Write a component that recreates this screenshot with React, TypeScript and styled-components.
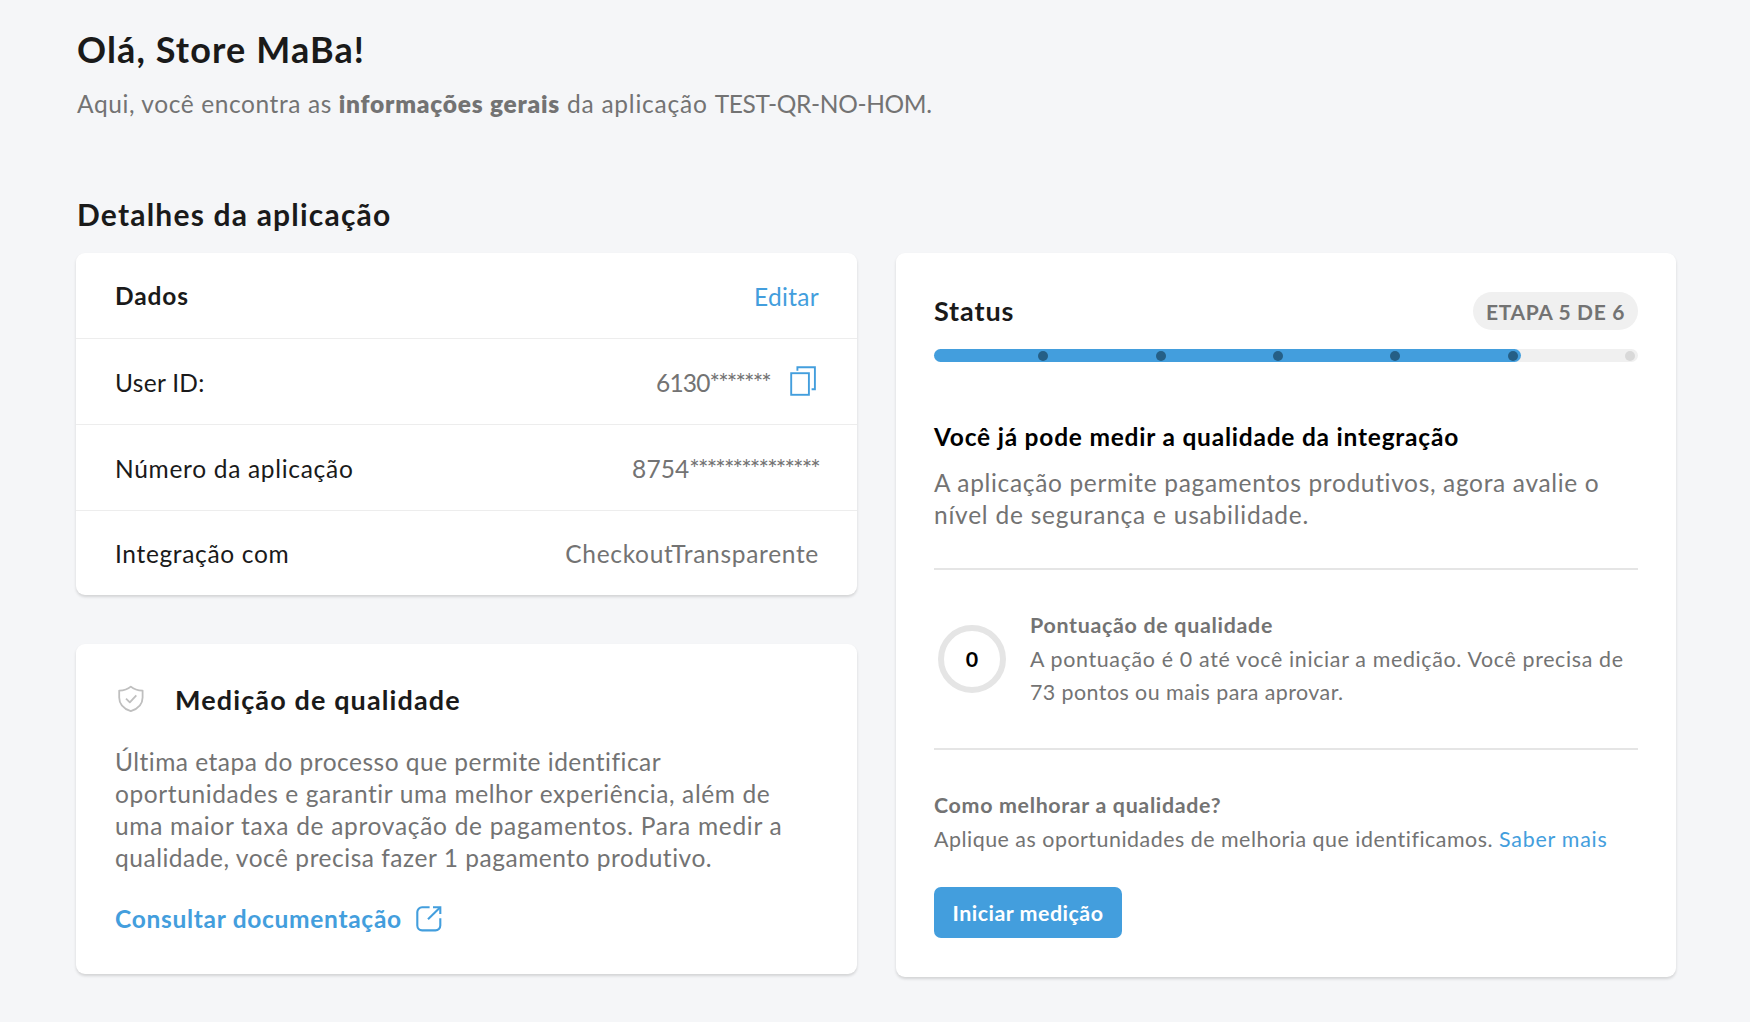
import React from "react";
import styled, { createGlobalStyle } from "styled-components";

const color = {
  page: "#f5f6f8",
  ink: "#1a1a1a",
  muted: "#737373",
  blue: "#439edd",
  line: "#ededed",
  rule: "#e5e5e5",
};

const GlobalStyle = createGlobalStyle`
  * { box-sizing: border-box; }
  body {
    margin: 0;
    background: ${color.page};
    color: ${color.ink};
    font-family: Lato, "Liberation Sans", sans-serif;
    -webkit-font-smoothing: antialiased;
  }
  h1, h2, h3, h4, p { margin: 0; }
`;

const Page = styled.main`
  width: 1750px;
  height: 1022px;
  padding: 27px 74px 0 76px;
  overflow: hidden;
`;

const Tracked = styled.span<{ $spacing: number }>`
  letter-spacing: ${(p) => p.$spacing}px;
`;

const PageTitle = styled.h1`
  padding-left: 1px;
  font-size: 36px;
  line-height: 44px;
  font-weight: 700;
  letter-spacing: 1.12px;
`;

const Intro = styled.p`
  margin-top: 17px;
  padding-left: 1px;
  color: ${color.muted};
  font-size: 24.5px;
  line-height: 32px;
  letter-spacing: 0.59px;
  white-space: nowrap;

  strong {
    font-weight: 800;
    letter-spacing: 0.78px;
  }
`;

const SectionTitle = styled.h2`
  margin-top: 76px;
  padding-left: 1px;
  font-size: 30px;
  line-height: 36px;
  font-weight: 700;
  letter-spacing: 1.2px;
`;

const Columns = styled.div`
  display: grid;
  grid-template-columns: 781px 780px;
  column-gap: 39px;
  align-items: start;
  margin-top: 21px;
`;

const Stack = styled.div`
  display: flex;
  flex-direction: column;
  gap: 49px;
`;

const Card = styled.section`
  background: #fff;
  border-radius: 9px;
  box-shadow: 0 2px 3px rgba(0, 0, 0, 0.14);
`;

const DataCard = styled(Card)`
  height: 342px;
`;

const Row = styled.div`
  display: flex;
  align-items: center;
  justify-content: space-between;
  height: 86px;
  padding: 2px 38px 0 39px;
  border-bottom: 1px solid ${color.line};
  font-size: 24.5px;
  line-height: 32px;

  &:last-child {
    height: 84px;
    border-bottom: 0;
  }
`;

const RowHeading = styled.h3`
  padding-bottom: 2px;
  font-size: 24.5px;
  font-weight: 700;
  letter-spacing: 0.9px;
`;

const RowLabel = styled.span<{ $spacing: number }>`
  letter-spacing: ${(p) => p.$spacing}px;
`;

const RowValue = styled.span`
  display: flex;
  align-items: center;
  color: ${color.muted};
  letter-spacing: 0.69px;
`;

const Mask = styled.span`
  letter-spacing: -1.77px;
`;

const CopyButton = styled.button`
  display: flex;
  width: 26px;
  height: 30px;
  margin: -3px 3px 0 20px;
  padding: 0;
  border: 0;
  background: none;
  color: ${color.blue};
`;

const Link = styled.a<{ $spacing: number }>`
  color: ${color.blue};
  text-decoration: none;
  letter-spacing: ${(p) => p.$spacing}px;
`;

const QualityCard = styled(Card)`
  height: 330px;
  padding: 39px 38px 0 39px;
`;

const QualityHeader = styled.header`
  display: flex;
  align-items: center;
  gap: 28px;
  height: 32px;
`;

const CardTitle = styled.h3<{ $spacing: number }>`
  padding-top: 1px;
  font-size: 27px;
  line-height: 32px;
  font-weight: 700;
  letter-spacing: ${(p) => p.$spacing}px;
`;

const Body = styled.p<{ $top: number }>`
  margin-top: ${(p) => p.$top}px;
  color: ${color.muted};
  font-size: 24.5px;
  line-height: 32px;
  white-space: nowrap;
`;

const DocsLink = styled.a`
  display: flex;
  align-items: center;
  gap: 14px;
  margin-top: 29px;
  color: ${color.blue};
  font-size: 24.5px;
  line-height: 32px;
  font-weight: 700;
  letter-spacing: 0.7px;
  text-decoration: none;
`;

const StatusCard = styled(Card)`
  height: 724px;
  padding: 39px 38px 0;
`;

const StatusHeader = styled.header`
  display: flex;
  align-items: center;
  justify-content: space-between;
  height: 38px;
`;

const StatusTitle = styled(CardTitle)`
  padding: 0 0 1px;
`;

const Badge = styled.span`
  display: flex;
  align-items: center;
  justify-content: center;
  width: 165px;
  height: 38px;
  border-radius: 19px;
  background: #f0f0f0;
  color: ${color.muted};
  font-size: 21px;
  font-weight: 700;
  letter-spacing: 0.65px;
`;

const Track = styled.div`
  display: flex;
  height: 13px;
  margin-top: 19px;
  border-radius: 7px;
  background: #f0f0f0;
`;

const Fill = styled.div`
  display: flex;
  height: 13px;
  border-radius: 7px;
  background: ${color.blue};
`;

const Step = styled.span`
  flex: 1;
  display: flex;
  justify-content: flex-end;
  padding: 2px 3px 0 0;
`;

const Dot = styled.i<{ $done?: boolean }>`
  width: 10px;
  height: 10px;
  border-radius: 50%;
  background: ${(p) => (p.$done ? "#255f86" : "#d9d9d9")};
`;

const StatusHeading = styled.h3`
  margin-top: 59px;
  color: #000;
  font-size: 24.5px;
  line-height: 32px;
  font-weight: 700;
  letter-spacing: 0.78px;
`;

const Score = styled.div`
  display: flex;
  align-items: flex-start;
  height: 182px;
  margin-top: 37px;
  padding-top: 39px;
  border-top: 2px solid ${color.rule};
  border-bottom: 2px solid ${color.rule};
`;

const Ring = styled.div`
  display: flex;
  align-items: center;
  justify-content: center;
  width: 68px;
  height: 68px;
  margin: 16px 24px 0 4px;
  border: 6.5px solid ${color.rule};
  border-radius: 50%;
  color: #000;
  font-size: 21.4px;
  font-weight: 700;
`;

const Note = styled.div`
  color: ${color.muted};
  font-size: 21.4px;
  line-height: 33.6px;
  white-space: nowrap;
`;

const NoteTitle = styled.h4<{ $spacing: number }>`
  font-size: inherit;
  font-weight: 700;
  letter-spacing: ${(p) => p.$spacing}px;
`;

const NoteText = styled.p<{ $spacing: number }>`
  letter-spacing: ${(p) => p.$spacing}px;
`;

const Help = styled(Note)`
  padding-top: 39px;
`;

const PrimaryButton = styled.button`
  width: 188px;
  height: 51px;
  margin-top: 31px;
  padding: 0;
  border: 0;
  border-radius: 7px;
  background: ${color.blue};
  color: #fff;
  font: 700 21.4px/32px Lato, "Liberation Sans", sans-serif;
  letter-spacing: 0.5px;
`;

const CopyIcon = () => (
  <svg width="26" height="30" viewBox="0 0 26 30" fill="none" stroke="currentColor" strokeWidth="1.9">
    <rect x="1.2" y="7.2" width="17.7" height="21.6" />
    <path d="M7.4 4.8V1.2H24.9V23.3H21.6" />
  </svg>
);

const ShieldIcon = () => (
  <svg width="32" height="32" viewBox="1 0 32 32" fill="none" stroke="#bfbfbf" strokeWidth="1.8" strokeLinejoin="round">
    <path d="M16.8 3.6C13.6 6.4 9.6 7.5 5.2 7.6V14.5C5.2 21 9.3 25.7 16.8 28.2C24.3 25.7 28.6 21 28.6 14.5V7.6C24.2 7.5 20 6.4 16.8 3.6Z" />
    <path d="M12 15.6L15.8 19.3L22.3 12.3" />
  </svg>
);

const ExternalIcon = () => (
  <svg width="26" height="26" viewBox="0 0 26 26" fill="none" stroke="currentColor" strokeWidth="2.1">
    <path d="M13.6 1.3H6.1A4.8 4.8 0 0 0 1.3 6.1V19.6A4.8 4.8 0 0 0 6.1 24.4H19.5A4.8 4.8 0 0 0 24.3 19.6V12.2" />
    <path d="M12 13.2L24 1.6" />
    <path d="M17 1.3H24.3V8" />
  </svg>
);

const totalSteps = 6;
const doneSteps = 5;

export default function App() {
  return (
    <Page>
      <GlobalStyle />
      <PageTitle>Olá, Store MaBa!</PageTitle>
      <Intro>
        Aqui, você encontra as <strong>informações gerais</strong>{" "}
        <Tracked $spacing={0.77}>da aplicação </Tracked>
        <Tracked $spacing={-0.35}>TEST-QR-NO-HOM.</Tracked>
      </Intro>
      <SectionTitle>Detalhes da aplicação</SectionTitle>
      <Columns>
        <Stack>
          <DataCard>
            <Row>
              <RowHeading>Dados</RowHeading>
              <Link href="#" $spacing={0.3}>Editar</Link>
            </Row>
            <Row>
              <RowLabel $spacing={0.3}>User ID:</RowLabel>
              <RowValue>
                <Tracked $spacing={-0.85}>6130</Tracked>
                <Mask>*******</Mask>
                <CopyButton aria-label="Copiar"><CopyIcon /></CopyButton>
              </RowValue>
            </Row>
            <Row>
              <RowLabel $spacing={0.7}>Número da aplicação</RowLabel>
              <RowValue>
                <Tracked $spacing={0.1}>8754</Tracked>
                <Mask>***************</Mask>
              </RowValue>
            </Row>
            <Row>
              <RowLabel $spacing={0.66}>Integração com</RowLabel>
              <RowValue>CheckoutTransparente</RowValue>
            </Row>
          </DataCard>
          <QualityCard>
            <QualityHeader>
              <ShieldIcon />
              <CardTitle $spacing={1.12}>Medição de qualidade</CardTitle>
            </QualityHeader>
            <Body $top={31}>
              <Tracked $spacing={0.49}>Última etapa do processo que permite identificar</Tracked>
              <br />
              <Tracked $spacing={0.6}>oportunidades e garantir uma melhor experiência, além de</Tracked>
              <br />
              <Tracked $spacing={0.7}>uma maior taxa de aprovação de pagamentos. Para medir a</Tracked>
              <br />
              <Tracked $spacing={0.53}>qualidade, você precisa fazer 1 pagamento produtivo.</Tracked>
            </Body>
            <DocsLink href="#">
              Consultar documentação <ExternalIcon />
            </DocsLink>
          </QualityCard>
        </Stack>
        <StatusCard>
          <StatusHeader>
            <StatusTitle $spacing={0.9}>Status</StatusTitle>
            <Badge>ETAPA 5 DE 6</Badge>
          </StatusHeader>
          <Track>
            <Fill style={{ width: `${(doneSteps / totalSteps) * 100}%` }}>
              {Array.from({ length: doneSteps }, (_, i) => (
                <Step key={i}><Dot $done /></Step>
              ))}
            </Fill>
            <Step><Dot /></Step>
          </Track>
          <StatusHeading>Você já pode medir a qualidade da integração</StatusHeading>
          <Body $top={14}>
            <Tracked $spacing={0.66}>A aplicação permite pagamentos produtivos, agora avalie o</Tracked>
            <br />
            <Tracked $spacing={0.77}>nível de segurança e usabilidade.</Tracked>
          </Body>
          <Score>
            <Ring>0</Ring>
            <Note>
              <NoteTitle $spacing={0.7}>Pontuação de qualidade</NoteTitle>
              <NoteText $spacing={0.66}>
                A pontuação é 0 até você iniciar a medição. Você precisa de
              </NoteText>
              <NoteText $spacing={0.44}>73 pontos ou mais para aprovar.</NoteText>
            </Note>
          </Score>
          <Help>
            <NoteTitle $spacing={0.67}>Como melhorar a qualidade?</NoteTitle>
            <NoteText $spacing={0.51}>
              Aplique as oportunidades de melhoria que identificamos.{" "}
              <Link href="#" $spacing={0.78}>Saber mais</Link>
            </NoteText>
          </Help>
          <PrimaryButton>Iniciar medição</PrimaryButton>
        </StatusCard>
      </Columns>
    </Page>
  );
}
